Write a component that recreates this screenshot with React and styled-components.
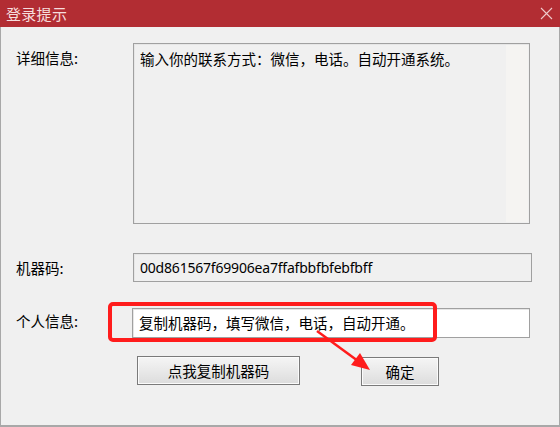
import styled, { createGlobalStyle } from 'styled-components';

const Global = createGlobalStyle`
    html, body {
        margin: 0;
        padding: 0;
        background: #f0f0f0;
    }
    body {
        font-family: "Noto Sans CJK SC", "Noto Sans", sans-serif;
        font-size: 14.5px;
        color: #000;
    }
`;

const Window = styled.div`
    position: relative;
    width: 560px;
    height: 427px;
    box-sizing: border-box;
    border: 1px solid #a8a8a8;
    border-top: none;
    border-bottom: 2px solid #a8a8a8;
    background: #f0f0f0;
    display: flex;
    flex-direction: column;
`;

const TitleBar = styled.div`
    flex: none;
    height: 27px;
    margin: 0 -1px;
    background: #b22d33;
    display: flex;
    align-items: center;
    justify-content: space-between;
    padding: 0 7px 0 6px;

    h1 {
        margin: 0;
        font-size: 15px;
        font-weight: normal;
        color: #f6dede;
        letter-spacing: 0.3px;
    }
`;

const Body = styled.div`
    display: flex;
    flex-direction: column;
    padding-left: 15px;
`;

const Row = styled.div`
    display: flex;
    align-items: ${p => (p.$top ? 'flex-start' : 'center')};
    margin-top: ${p => p.$mt}px;
`;

const Label = styled.div`
    flex: none;
    width: 117px;
    line-height: 20px;
    padding-top: ${p => p.$pt || 0}px;
    margin-top: ${p => p.$shift || 0}px;
`;

const Field = styled.div`
    box-sizing: border-box;
    width: ${p => p.$w || 398}px;
    height: ${p => p.$h}px;
    margin-left: ${p => p.$ml || 0}px;
    border: 1px solid #a0a0a0;
    box-shadow: inset 1px 1px 0 #e6e6e6;
    background: ${p => (p.$white ? '#ffffff' : '#f0f0f0')};
    padding: ${p => p.$pad || '0 6px'};
    line-height: 20px;
    display: flex;
    align-items: ${p => (p.$top ? 'flex-start' : 'center')};
    position: relative;
    white-space: nowrap;
`;

const ScrollTrack = styled.div`
    position: absolute;
    top: 1px;
    right: 1px;
    bottom: 1px;
    width: 22px;
    background: #f5f4f2;
`;

const Hex = styled.span`
    font-family: "Noto Sans", sans-serif;
    font-size: 14px;
    letter-spacing: -0.2px;
`;

const Buttons = styled.div`
    margin-top: 18px;
    margin-left: 121px;
    display: flex;
    align-items: flex-start;
    gap: 61px;
`;

const Button = styled.button`
    box-sizing: border-box;
    width: ${p => p.$w}px;
    height: 29px;
    margin-top: ${p => p.$mt || 0}px;
    border: 1px solid #7a7a7a;
    box-shadow: inset 0 0 0 1px #fbfbfb;
    background: linear-gradient(#f5f5f5, #e9e9e9 50%, #dcdcdc);
    font-family: inherit;
    font-size: 14.5px;
    color: #000;
    padding: 0;
`;

const Highlight = styled.div`
    position: absolute;
    left: 107px;
    top: 302px;
    width: 329px;
    height: 40px;
    box-sizing: border-box;
    border: 4px solid #ff1c1c;
    border-radius: 5px;
    pointer-events: none;
`;

const Overlay = styled.svg`
    position: absolute;
    left: 0;
    top: 0;
    pointer-events: none;
`;

function CloseIcon() {
    return (
        <svg width="13" height="13" viewBox="0 0 13 13">
            <path d="M1 1L12 12M12 1L1 12" stroke="#eec9ca" strokeWidth="1.1" fill="none" />
        </svg>
    );
}

export default function App() {
    return (
        <>
            <Global />
            <Window>
                <TitleBar>
                    <h1>登录提示</h1>
                    <CloseIcon />
                </TitleBar>
                <Body>
                    <Row $top $mt={16}>
                        <Label $pt={5}>详细信息:</Label>
                        <Field $h={181} $w={397} $top $pad="5px 6px">
                            输入你的联系方式：微信，电话。自动开通系统。
                            <ScrollTrack />
                        </Field>
                    </Row>

                    <Row $mt={29}>
                        <Label>机器码:</Label>
                        <Field $h={29} $w={399}>
                            <Hex>00d861567f69906ea7ffafbbfbfebfbff</Hex>
                        </Field>
                    </Row>

                    <Row $mt={26}>
                        <Label $shift={-4}>个人信息:</Label>
                        <Field $h={30} $w={398} $ml={-1} $white>
                            复制机器码，填写微信，电话，自动开通。
                        </Field>
                    </Row>

                    <Buttons>
                        <Button $w={163}>点我复制机器码</Button>
                        <Button $w={78} $mt={1}>确定</Button>
                    </Buttons>
                </Body>
                <Highlight />
                <Overlay width="560" height="427">
                    <line x1="316" y1="331" x2="357" y2="361" stroke="#ff1c1c" strokeWidth="2.5" />
                    <polygon points="369,370 350,365 359,353" fill="#ff1c1c" />
                </Overlay>
            </Window>
        </>
    );
}
